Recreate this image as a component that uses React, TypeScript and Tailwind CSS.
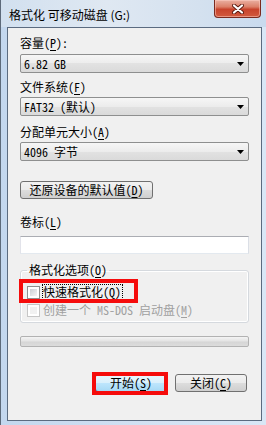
import React from "react";

const Arrow = () => (
  <svg width="7" height="4" viewBox="0 0 7 4" className="shrink-0">
    <path d="M0 0H7L3.5 4Z" fill="#000" />
  </svg>
);

const Combo = ({ children }: { children: React.ReactNode }) => (
  <div className="h-[19px] flex items-center justify-between pl-[3px] pr-[4px] border border-[#8e8f8f] rounded-[2px] bg-[linear-gradient(#f6f6f6,#ececec_50%,#e2e2e2_50%,#dadada)] text-[12px] leading-[16px] text-black">
    <span>{children}</span>
    <Arrow />
  </div>
);

const Label = ({ children, className = "" }: { children: React.ReactNode; className?: string }) => (
  <div className={"h-[16px] text-[12px] leading-[16px] text-black " + className}>{children}</div>
);

const U = ({ c }: { c: string }) => <span className="underline underline-offset-[2px]">{c}</span>;

export default function App() {
  return (
    <div className="w-[266px] h-[425px] overflow-hidden flex flex-col border-l border-[#5d6a7a] bg-[linear-gradient(90deg,#c3d7ee,#d3e2f3_60%,#d9e7f6)] font-['Noto_Sans_Mono_CJK_SC','Noto_Sans_CJK_SC',sans-serif]">
      {/* title bar */}
      <div className="relative h-[27px] shrink-0 flex items-center pl-[8px] bg-[linear-gradient(90deg,#d2e0ef,#dfe8f2_40%,#d4e1ef_75%,#c9daee)]">
        <span className="text-[12px] leading-[16px] text-black font-['Noto_Sans_CJK_SC',sans-serif] mt-[2px]">
          格式化 可移动磁盘 (G:)
        </span>
        <div className="absolute top-0 right-[5px] w-[47px] h-[18px] rounded-b-[4px] border border-t-0 border-[#7a2a1f] bg-[linear-gradient(#eab0a2,#dc8069_40%,#c8432c_55%,#d25a3e)] flex items-center justify-center shadow-[inset_0_0_0_1px_rgba(255,210,200,0.5)]">
          <svg width="12" height="10" viewBox="0 0 12 10">
            <path d="M2 1.5L10 8.5M10 1.5L2 8.5" stroke="#5a1a10" strokeWidth="4" strokeLinecap="round" />
            <path d="M2 1.5L10 8.5M10 1.5L2 8.5" stroke="#ffffff" strokeWidth="2.2" strokeLinecap="round" />
          </svg>
        </div>
      </div>

      {/* client */}
      <div className="ml-[6px] w-[255px] h-[394px] shrink-0 border border-[#5b6b80] bg-[#f0f0f0] flex flex-col px-[12px] pt-[7px]">
        <Label>
          容量(<U c="P" />):
        </Label>
        <div className="mt-[3px]">
          <Combo>6.82 GB</Combo>
        </div>
        <Label className="mt-[6px]">
          文件系统(<U c="F" />)
        </Label>
        <div className="mt-[2px]">
          <Combo>FAT32 (默认)</Combo>
        </div>
        <Label className="mt-[8px]">
          分配单元大小(<U c="A" />)
        </Label>
        <div className="mt-[2px]">
          <Combo>4096 字节</Combo>
        </div>

        <button className="mt-[20px] w-[133px] h-[18px] flex items-center justify-center border border-[#707070] rounded-[3px] bg-[linear-gradient(#f2f2f2,#ebebeb_50%,#dddddd_50%,#cfcfcf)] text-[12px] leading-[16px] text-black">
          还原设备的默认值(<U c="D" />)
        </button>

        <Label className="mt-[15px]">
          卷标(<U c="L" />)
        </Label>
        <div className="mt-[6px] h-[18px] bg-white border border-[#abadb3] border-l-[#e2e3ea] border-r-[#dbdfe6] border-b-[#e3e9ef]" />

        <fieldset className="mt-[8px] border border-[#d5d9de] rounded-[3px] pl-[6px] pr-[6px] pb-[4px] shadow-[inset_0_0_0_1px_#ffffff]">
          <legend className="px-[2px] h-[16px] text-[12px] leading-[16px] text-black">
            格式化选项(<U c="O" />)
          </legend>
          <div className="relative mt-[6px] h-[16px] flex items-center">
            <div className="w-[13px] h-[13px] border border-[#8e8f8f] bg-white p-[2px]">
              <div className="w-full h-full bg-linear-to-br from-[#cbcfd5] to-[#f6f6f6]" />
            </div>
            <span className="ml-[2px] h-[16px] border border-dotted border-black text-[12px] leading-[14px] text-black pr-[1px]">
              快速格式化(<U c="Q" />)
            </span>
            <div className="absolute left-[-8px] top-[-5px] w-[119px] h-[24px] border-[4px] border-[#f50c0c]" />
          </div>
          <div className="mt-[2px] h-[16px] flex items-center">
            <div className="w-[13px] h-[13px] border border-[#c6c6c6] bg-white p-[2px]">
              <div className="w-full h-full bg-[#f1f1f1]" />
            </div>
            <span className="ml-[3px] text-[12px] leading-[16px] text-[#a0a0a0] whitespace-pre">
              创建一个 MS-DOS 启动盘(<U c="M" />)
            </span>
          </div>
        </fieldset>

        <div className="mt-[13px] h-[11px] rounded-[2px] border border-[#b2b2b2] bg-[linear-gradient(#f4f4f4,#e4e4e4_45%,#d6d6d6_55%,#dcdcdc)]" />

        <div className="mt-[27px] flex justify-end pr-[2px] gap-[8px]">
          <div className="relative">
            <button className="w-[72px] h-[18px] flex items-center justify-center border border-[#3c7fb1] rounded-[3px] bg-[linear-gradient(#eaf6fd,#d9f0fc_50%,#bee6fd_50%,#a7d9f5)] text-[12px] leading-[16px] text-black">
              开始(<U c="S" />)
            </button>
            <div className="absolute left-[-3px] top-[-2px] w-[76px] h-[23px] border-[4px] border-[#f50c0c]" />
          </div>
          <button className="w-[72px] h-[18px] flex items-center justify-center border border-[#707070] rounded-[3px] bg-[linear-gradient(#f2f2f2,#ebebeb_50%,#dddddd_50%,#cfcfcf)] text-[12px] leading-[16px] text-black">
            关闭(<U c="C" />)
          </button>
        </div>
      </div>
    </div>
  );
}
